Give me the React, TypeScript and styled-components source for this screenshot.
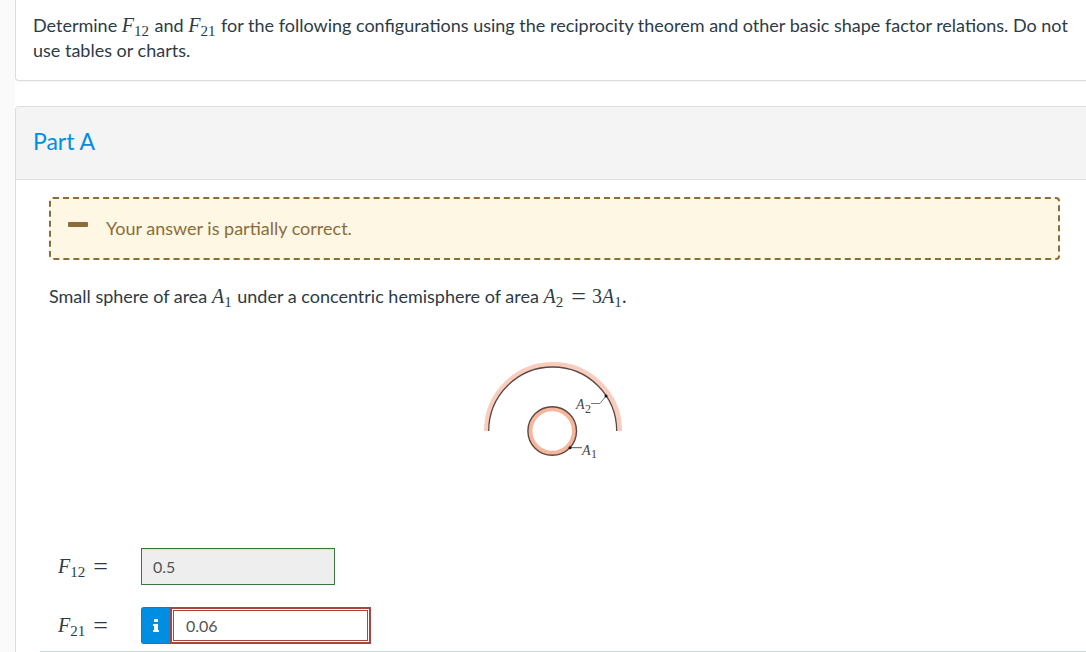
import React from "react";
import styled, { createGlobalStyle } from "styled-components";

const GlobalStyle = createGlobalStyle`
  *, *::before, *::after { box-sizing: border-box; }
  body {
    margin: 0;
    background: #fafafa;
    color: #2d3b45;
    font: 18px/25px Lato, sans-serif;
  }
`;

const Page = styled.main`
  margin-left: 15px;
  min-height: 100vh;
  background: #fff;
  display: flex;
  flex-direction: column;
  gap: 25px;
  overflow-x: hidden;
`;

const Prompt = styled.section`
  border: 1px solid #dddddd;
  border-width: 0 0 1px 1px;
  border-bottom-left-radius: 4px;
  box-shadow: 0 1px 1px rgba(0, 0, 0, 0.05);
  padding: 13px 10px 17px 17px;
`;

const Paragraph = styled.p`
  margin: 0;
`;

const Part = styled.section`
  flex: 1;
  display: flex;
  flex-direction: column;
  border: 1px solid #dddddd;
  border-width: 1px 0 0 1px;
  border-top-left-radius: 4px;
`;

const PartHeader = styled.header`
  background: #f4f4f4;
  border-bottom: 1px solid #dddddd;
  border-top-left-radius: 3px;
  padding: 18px 17px 22px;
`;

const PartTitle = styled.h2`
  margin: 0;
  font-size: 23px;
  line-height: 32px;
  font-weight: 400;
  color: #008ee2;
`;

const PartBody = styled.div`
  flex: 1;
  display: flex;
  flex-direction: column;
  padding: 17px 26px 7px 33px;
`;

const Alert = styled.div`
  display: flex;
  align-items: center;
  gap: 18px;
  height: 63px;
  margin-bottom: 24px;
  padding: 0 17px;
  border: 2px dashed #8a6d3b;
  border-radius: 4px;
  background: #fdf7e3;
  color: #8a6d3b;
`;

const Dash = styled.span`
  width: 20px;
  height: 5px;
  margin-bottom: 8px;
  border-radius: 1px;
  background: #8a6d3b;
`;

const Formula = styled.span`
  margin-right: 1px;
  font-family: "Liberation Serif", serif;
  font-size: 20px;
  line-height: 20px;
  white-space: nowrap;
`;

const Variable = styled.i`
  sub {
    font-size: 15px;
    font-style: normal;
    line-height: 0;
    vertical-align: -4px;
  }
`;

const Relation = styled.span`
  margin: 0 6px 0 8px;
  font-size: 26px;
  line-height: 0;
  vertical-align: -2px;
`;

const Figure = styled.figure`
  display: flex;
  justify-content: center;
  margin: 51px 0 88px;
`;

const Diagram = styled.svg`
  display: block;
  font-family: "Liberation Serif", serif;
`;

const Answers = styled.form`
  display: flex;
  flex-direction: column;
  gap: 22px;
  padding-left: 9px;
`;

const AnswerRow = styled.div`
  display: flex;
  align-items: center;
`;

const AnswerLabel = styled.label`
  width: 83px;
`;

const AnswerInput = styled.input<{ $correct?: boolean }>`
  width: ${(p) => (p.$correct ? 194 : 201)}px;
  height: 37px;
  padding: ${(p) => (p.$correct ? "0 11px" : "0 14px")};
  border: ${(p) => (p.$correct ? "1px solid #3c763d" : "2px solid #a94442")};
  border-radius: 0;
  outline: 0;
  background: ${(p) => (p.$correct ? "#eeeeee" : "#ffffff")};
  box-shadow: ${(p) =>
    p.$correct
      ? "inset 0 1px 1px rgba(0, 0, 0, 0.075)"
      : "inset 0 0 0 1px #ffffff, inset 0 0 0 2px #a94442"};
  color: #555555;
  font: 16px/22px Lato, sans-serif;
`;

const InfoButton = styled.button`
  display: flex;
  align-items: center;
  justify-content: center;
  width: 29px;
  height: 37px;
  padding: 0;
  border: 1px solid #0081cf;
  border-right: 0;
  border-radius: 3px 0 0 3px;
  background: #008ee2;
`;

const BottomRule = styled.hr`
  width: calc(100% - 24px);
  height: 1px;
  margin: 0 0 0 24px;
  border: 0;
  background: #c9dcd9;
`;

function Term({ name, index }: { name: string; index: string }) {
  return (
    <Variable>
      {name}
      <sub>{index}</sub>
    </Variable>
  );
}

function HemisphereDiagram() {
  return (
    <Diagram width="142" height="100" viewBox="484 360 142 100" role="img" aria-label="Small sphere under a concentric hemisphere">
      <path d="M486.500 431 A66.500 66.500 0 0 1 619.500 431" fill="none" stroke="#f8cdbd" strokeWidth="5" />
      <path d="M488.700 431 A64 64 0 0 1 616.700 431" fill="none" stroke="#5b4845" strokeWidth="1.300" />
      <circle cx="552.200" cy="431" r="22" fill="none" stroke="#f7b59c" strokeWidth="4.500" />
      <circle cx="552.200" cy="431" r="24.300" fill="none" stroke="#5b4845" strokeWidth="1.400" />
      <path d="M591 403.500 H600 L606 396" fill="none" stroke="#777" strokeWidth="1" />
      <path d="M570 447.700 H582" fill="none" stroke="#555" strokeWidth="1" />
      <circle cx="606" cy="396" r="1.500" fill="#111" />
      <circle cx="570" cy="447.700" r="1.500" fill="#111" />
      <text x="576" y="409" fontSize="14" fontStyle="italic" fill="#444">A</text>
      <text x="585" y="413" fontSize="12" fill="#444">2</text>
      <text x="582" y="455" fontSize="14" fontStyle="italic" fill="#444">A</text>
      <text x="591" y="458" fontSize="12" fill="#444">1</text>
    </Diagram>
  );
}

function InfoIcon() {
  return (
    <svg width="8" height="14" viewBox="0 0 8 14" fill="#fff" aria-hidden="true">
      <path d="M2 0h4v3H2zM1 5h5v6h1v2H1v-2h1V7H1z" />
    </svg>
  );
}

export default function App() {
  return (
    <>
      <GlobalStyle />
      <Page>
        <Prompt>
          <Paragraph>
            Determine <Formula><Term name="F" index="12" /></Formula>{" "}
            and <Formula><Term name="F" index="21" /></Formula>{" "}
            for the following configurations using the reciprocity theorem and other basic shape
            factor relations. Do not use tables or charts.
          </Paragraph>
        </Prompt>
        <Part>
          <PartHeader>
            <PartTitle>Part A</PartTitle>
          </PartHeader>
          <PartBody>
            <Alert role="status">
              <Dash />
              <span>Your answer is partially correct.</span>
            </Alert>
            <Paragraph>
              Small sphere of area <Formula><Term name="A" index="1" /></Formula>{" "}
              under a concentric hemisphere of area{" "}
              <Formula>
                <Term name="A" index="2" />
                <Relation>=</Relation>3<Term name="A" index="1" />.
              </Formula>
            </Paragraph>
            <Figure>
              <HemisphereDiagram />
            </Figure>
            <Answers onSubmit={(e) => e.preventDefault()}>
              <AnswerRow>
                <AnswerLabel htmlFor="f12">
                  <Formula><Term name="F" index="12" /><Relation>=</Relation></Formula>
                </AnswerLabel>
                <AnswerInput id="f12" $correct readOnly defaultValue="0.5" />
              </AnswerRow>
              <AnswerRow>
                <AnswerLabel htmlFor="f21">
                  <Formula><Term name="F" index="21" /><Relation>=</Relation></Formula>
                </AnswerLabel>
                <InfoButton type="button" aria-label="Answer information">
                  <InfoIcon />
                </InfoButton>
                <AnswerInput id="f21" defaultValue="0.06" />
              </AnswerRow>
            </Answers>
          </PartBody>
          <BottomRule />
        </Part>
      </Page>
    </>
  );
}
